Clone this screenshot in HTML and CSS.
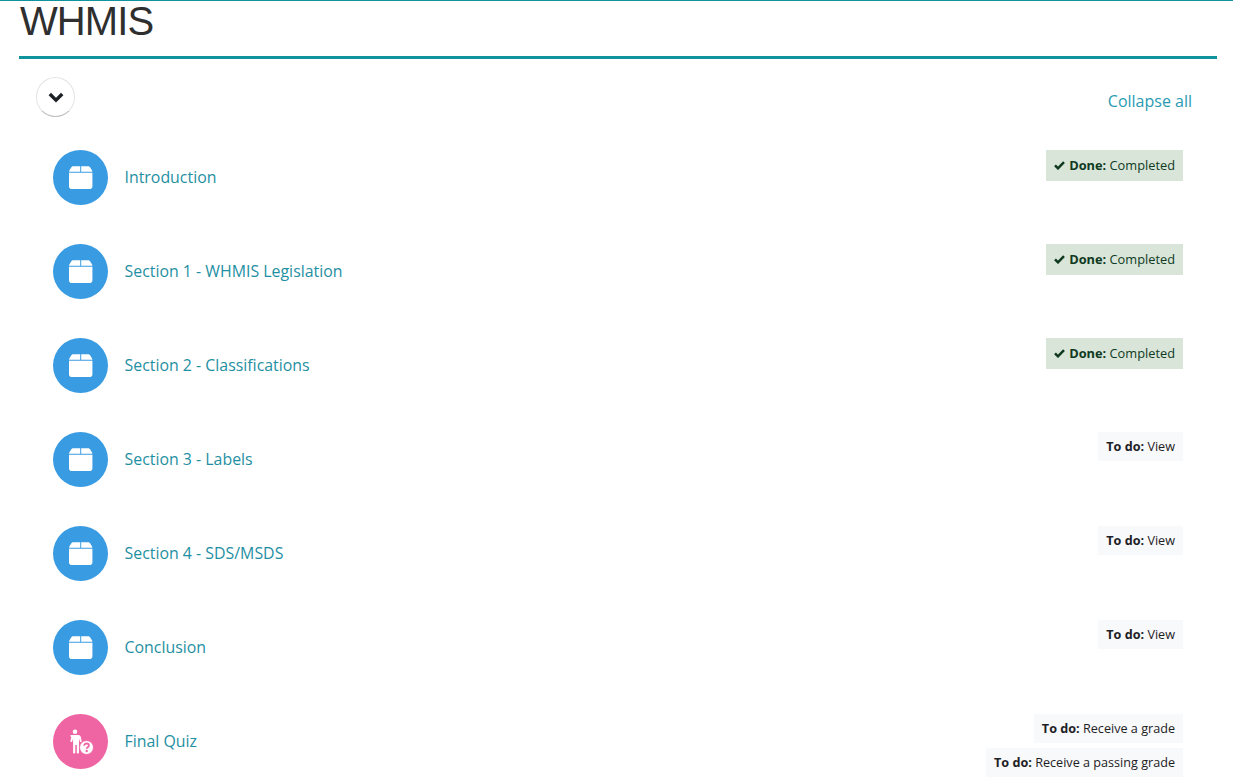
FILE: index.html
```html
<!DOCTYPE html>
<html lang="en">
<head>
<meta charset="utf-8">
<title>WHMIS</title>
<link rel="stylesheet" href="styles.css">
</head>
<body>
<svg class="defs" width="0" height="0" aria-hidden="true">
  <symbol id="box" viewBox="0 -0.200 24.600 24.600">
    <path fill="#fff" d="M0 5.700C.1 5.300.2 4.900.4 4.500L1.900 1.800C2.400.8 3.400.1 4.500.1h7v5.600zM12.500.1h7c1.100 0 2.100.7 2.600 1.700l1.500 2.700c.2.400.3.800.4 1.200H12.500zM0 6.700h24v14.100c0 1.500-1.200 2.700-2.700 2.700H2.700C1.200 23.500 0 22.300 0 20.800z"/>
  </symbol>
</svg>
<main class="page">
  <h1 class="title">WHMIS</h1>
  <div class="toolbar">
    <button class="toggle" type="button" aria-label="Toggle">
      <svg width="16" height="11" viewBox="0 0 16 11"><path d="M1.800 2l6.200 6.200L14.200 2" fill="none" stroke="#1d2125" stroke-width="3.400"/></svg>
    </button>
    <a class="collapse" href="#">Collapse all</a>
  </div>
  <ul class="list">
    <li class="row">
      <span class="icon blue"><svg width="24" height="24"><use href="#box"/></svg></span>
      <a class="name" href="#">Introduction</a>
      <div class="badges"><span class="badge done"><svg class="check" width="11" height="9" viewBox="0 0 11 9"><path d="M1 4.300l3 3 6-6.200" fill="none" stroke="#0f3a1f" stroke-width="2.500"/></svg><b>Done:</b> Completed</span></div>
    </li>
    <li class="row">
      <span class="icon blue"><svg width="24" height="24"><use href="#box"/></svg></span>
      <a class="name" href="#">Section 1 - WHMIS Legislation</a>
      <div class="badges"><span class="badge done"><svg class="check" width="11" height="9" viewBox="0 0 11 9"><path d="M1 4.300l3 3 6-6.200" fill="none" stroke="#0f3a1f" stroke-width="2.500"/></svg><b>Done:</b> Completed</span></div>
    </li>
    <li class="row">
      <span class="icon blue"><svg width="24" height="24"><use href="#box"/></svg></span>
      <a class="name" href="#">Section 2 - Classifications</a>
      <div class="badges"><span class="badge done"><svg class="check" width="11" height="9" viewBox="0 0 11 9"><path d="M1 4.300l3 3 6-6.200" fill="none" stroke="#0f3a1f" stroke-width="2.500"/></svg><b>Done:</b> Completed</span></div>
    </li>
    <li class="row">
      <span class="icon blue"><svg width="24" height="24"><use href="#box"/></svg></span>
      <a class="name" href="#">Section 3 - Labels</a>
      <div class="badges"><span class="badge todo"><b>To do:</b> View</span></div>
    </li>
    <li class="row">
      <span class="icon blue"><svg width="24" height="24"><use href="#box"/></svg></span>
      <a class="name" href="#">Section 4 - SDS/MSDS</a>
      <div class="badges"><span class="badge todo"><b>To do:</b> View</span></div>
    </li>
    <li class="row">
      <span class="icon blue"><svg width="24" height="24"><use href="#box"/></svg></span>
      <a class="name" href="#">Conclusion</a>
      <div class="badges"><span class="badge todo"><b>To do:</b> View</span></div>
    </li>
    <li class="row">
      <span class="icon pink">
        <svg width="26" height="26" viewBox="0 0 26 26">
          <circle cx="7" cy="2.800" r="2.300" fill="#fff"/>
          <path fill="#fff" d="M3.800 6h6.400c1.300 0 2.300.9 2.600 2.100l.9 3.900c.1.500-.2 1-.7 1.100-.5.100-1-.2-1.100-.7l-.9-3v14c0 .6-.5 1.100-1.100 1.100s-1.100-.5-1.100-1.100v-7.500H7.300v7.500c0 .6-.5 1.100-1.100 1.100s-1.100-.5-1.100-1.100V9.400l-.9 3c-.1.500-.6.800-1.100.7-.5-.1-.8-.6-.7-1.100l.9-3.900C1.500 6.900 2.500 6 3.800 6z"/>
          <circle cx="18.500" cy="18.500" r="7" fill="#fff" stroke="#ef65a3" stroke-width="1"/>
          <path d="M16.200 16.800c0-1.400 1-2.300 2.400-2.300s2.300.9 2.300 2c0 1.600-2.200 1.700-2.200 3.200" fill="none" stroke="#ef65a3" stroke-width="1.800"/>
          <circle cx="18.700" cy="22" r="1.200" fill="#ef65a3"/>
        </svg>
      </span>
      <a class="name" href="#">Final Quiz</a>
      <div class="badges">
        <span class="badge todo"><b>To do:</b> Receive a grade</span>
        <span class="badge todo"><b>To do:</b> Receive a passing grade</span>
      </div>
    </li>
  </ul>
</main>
</body>
</html>
```
FILE: styles.css
```css
html, body {
  margin: 0;
  padding: 0;
  height: 783px;
  overflow: hidden;
  background: #fff;
}
body {
  border-top: 1px solid #0f939c;
  font-family: "Open Sans", sans-serif;
  color: #1d2125;
}
.defs {
  position: absolute;
}
.page {
  margin: 0 16px 0 19px;
}
.title {
  margin: 0;
  height: 55px;
  border-bottom: 3px solid #0f939c;
  box-sizing: content-box;
  padding-left: 1px;
  font-family: "Liberation Sans", Arial, sans-serif;
  font-weight: 400;
  font-size: 40px;
  line-height: 40px;
  letter-spacing: -0.900px;
  color: #2f2f2f;
}
.toolbar {
  display: flex;
  justify-content: space-between;
  align-items: flex-start;
  padding: 18px 25px 0 17px;
  height: 73px;
  box-sizing: content-box;
}
.toggle {
  width: 39px;
  height: 40px;
  padding: 0;
  border: 1px solid #e4e4e4;
  border-bottom-color: #bdbdbd;
  border-radius: 50%;
  background: #fff;
  display: flex;
  align-items: center;
  justify-content: center;
}
.collapse {
  margin-top: 13px;
  font-size: 16px;
  line-height: 22px;
  color: #2a9bb2;
  text-decoration: none;
}
.list {
  list-style: none;
  margin: 0;
  padding: 0 34px;
}
.row {
  display: flex;
  align-items: flex-start;
  height: 94px;
}
.icon {
  flex: none;
  width: 55px;
  height: 55px;
  border-radius: 50%;
  display: flex;
  align-items: center;
  justify-content: center;
}
.blue {
  background: #399be2;
}
.pink {
  background: #ef65a3;
}
.name {
  margin-left: 16.500px;
  margin-top: 16px;
  font-size: 15.900px;
  line-height: 22px;
  color: #1f8fa3;
  text-decoration: none;
}
.badges {
  margin-left: auto;
  display: flex;
  flex-direction: column;
  align-items: flex-end;
  gap: 5px;
}
.badge {
  display: flex;
  align-items: center;
  white-space: pre;
  height: 29px;
  padding: 0 8px;
  font-size: 12.640px;
  line-height: 17px;
}
.badge b {
  font-weight: 700;
}
.done {
  height: 31px;
  font-size: 12.800px;
  background: #d8e5d8;
  color: #0f3a1f;
}
.check {
  margin-right: 4px;
}
.todo {
  background: #f8f9fa;
  color: #1d2125;
}
```
